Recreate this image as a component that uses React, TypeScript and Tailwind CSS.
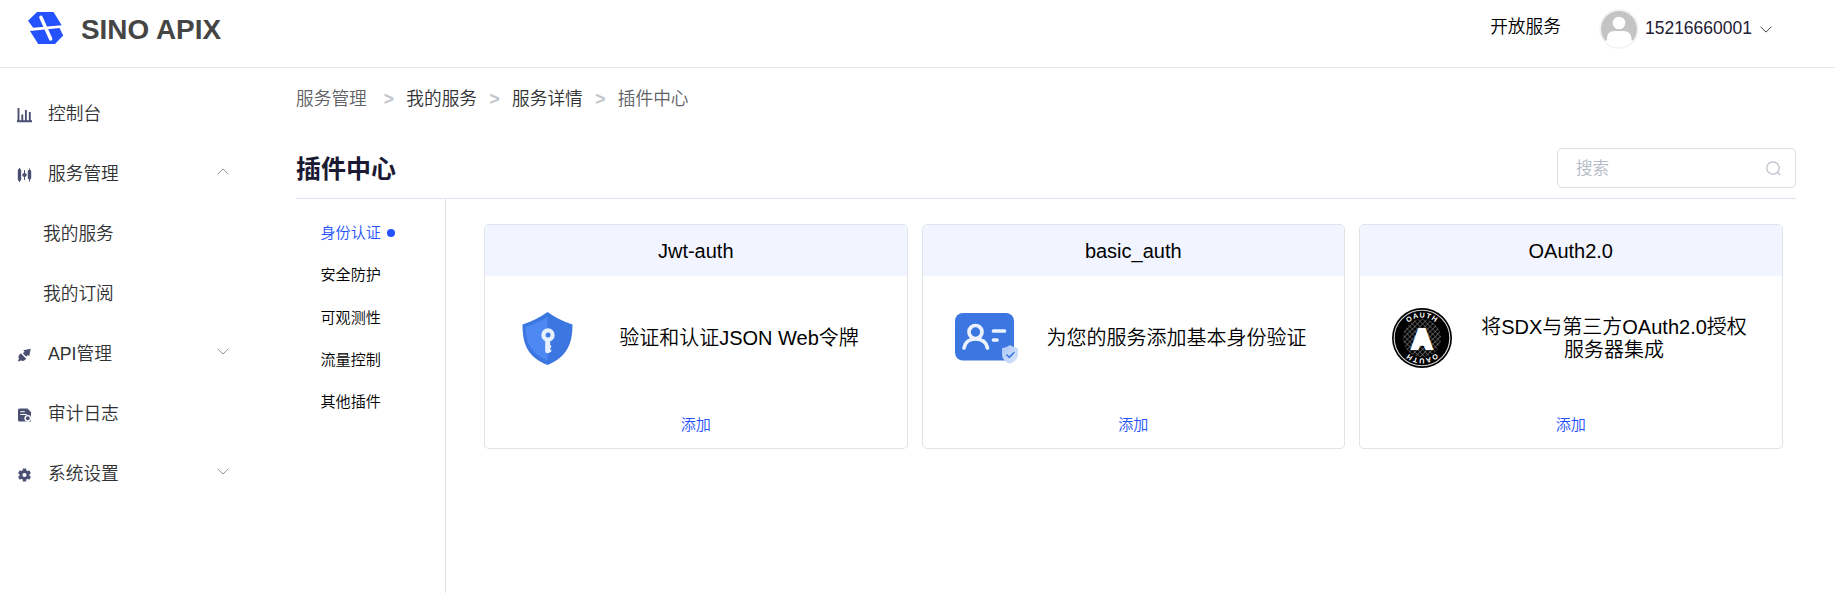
import React from "react";

const FONT = "font-['Liberation_Sans','Noto_Sans_CJK_SC',sans-serif]";

function Chevron({ up = false, className = "" }: { up?: boolean; className?: string }) {
  return (
    <svg viewBox="0 0 12 7" className={`h-[7px] w-3 shrink-0 ${className}`} fill="none" stroke="currentColor" strokeWidth="1">
      <path d={up ? "M0.6 6.3 6 0.9l5.4 5.4" : "M0.6 0.7 6 6.1l5.4-5.4"} />
    </svg>
  );
}

function Logo() {
  return (
    <svg viewBox="0 0 36 32" className="h-8 w-9" fill="#2452ff">
      <path d="M9 0h16.500l8.200 13.300-28.500 2.500L0 8.800z" />
      <path d="M2 18.900 31.500 16 35.200 23.500 27 32H10.200z" />
      <path d="M12.900 5.200 22.700 27" stroke="#fff" strokeWidth="3.400" strokeLinecap="round" />
    </svg>
  );
}

function Avatar() {
  return (
    <svg viewBox="0 0 40 40" className="size-10">
      <defs>
        <clipPath id="face"><circle cx="20" cy="20" r="18" /></clipPath>
      </defs>
      <circle cx="20" cy="20" r="19" fill="#fff" stroke="#f2f2f2" strokeWidth="1.500" />
      <g clipPath="url(#face)">
        <path d="M2 2h36v29.500h-5.500V30c0-5-3-8-8-8h-9c-5 0-7.500 3-7.500 8v1.500H2z" fill="#c4c4c4" />
        <circle cx="20" cy="14" r="6.300" fill="#fff" />
      </g>
    </svg>
  );
}

const icons: Record<string, React.ReactNode> = {
  chart: (
    <path d="M0 14.200h15M1.500 1v12.500M5.300 7.500v6.500M8.900 3v11M12.800 5v9" stroke="currentColor" strokeWidth="1.900" fill="none" />
  ),
  sliders: (
    <g>
      <path d="M2.500 1v14M7.500 3v10M12.500 1.500v13" stroke="currentColor" strokeWidth="1" />
      <rect x=".800" y="2" width="3.400" height="12" rx="1.400" />
      <path d="M7.500 5 10 8l-2.500 3L5 8z" />
      <rect x="10.800" y="3" width="3.400" height="9.500" rx="1.400" />
    </g>
  ),
  plug: (
    <g transform="rotate(45 7.500 8)">
      <path d="M3.700 9.400h7.600v2.300c0 1.500-1.600 2.700-2.800 2.900v2h-2v-2c-1.200-.2-2.800-1.400-2.800-2.900z" />
      <path d="M5.200 8V5.600H3.300L7.500-.8l4.200 6.400H9.800V8z" />
    </g>
  ),
  log: (
    <g>
      <path d="M2.500 1.500h8L14 5v9.500H2.500A1.500 1.500 0 0 1 1 13V3a1.500 1.500 0 0 1 1.500-1.500z" />
      <path d="M3.300 4.700h4.500M3.300 7.500h6.500" stroke="#fff" strokeWidth="1.100" />
      <circle cx="10.800" cy="11.300" r="2.700" fill="currentColor" stroke="#fff" strokeWidth="1.400" />
    </g>
  ),
  gear: (
    <g>
      <circle cx="7.500" cy="8" r="3.600" fill="none" stroke="currentColor" strokeWidth="3" />
      <path d="M7.500 1.500v3M7.500 11.500v3M1.900 4.800l2.500 1.400M10.600 9.800l2.500 1.400M1.900 11.200l2.500-1.400M10.600 6.200l2.500-1.400" stroke="currentColor" strokeWidth="3.400" />
    </g>
  ),
};

type Item = { label: string; icon?: string; arrow?: "up" | "down" };

const menu: Item[] = [
  { label: "控制台", icon: "chart" },
  { label: "服务管理", icon: "sliders", arrow: "up" },
  { label: "我的服务" },
  { label: "我的订阅" },
  { label: "API管理", icon: "plug", arrow: "down" },
  { label: "审计日志", icon: "log" },
  { label: "系统设置", icon: "gear", arrow: "down" },
];

function Sidebar() {
  return (
    <nav className="w-[246px] shrink-0 pt-[15px]">
      {menu.map((m) => (
        <div key={m.label} className={`flex h-[60px] items-center pr-[17px] ${m.icon ? "pl-[17px]" : "pl-[43px]"}`}>
          {m.icon && (
            <svg viewBox="0 0 15 16" className="mt-[3px] mr-4 h-4 w-[15px] shrink-0 text-[#4b5072]" fill="currentColor">
              {icons[m.icon]}
            </svg>
          )}
          <span className="pt-0.5 text-[17.700px] text-[#303133]">{m.label}</span>
          {m.arrow && <Chevron up={m.arrow === "up"} className="-mt-1 ml-auto text-[#909399]" />}
        </div>
      ))}
    </nav>
  );
}

function ShieldIcon() {
  return (
    <svg viewBox="0 0 60 60" className="size-[60px]">
      <path d="M30.500 4Q41.500 12 55.500 16.500C55.500 36 50 49 30.500 57 10.500 49 5.500 36 5.500 16.500Q19.500 12 30.500 4z" fill="#3b76e1" />
      <path d="M30.500 8.500V52.500C13.500 45 8.800 34 8.500 19Q20 15.500 30.500 8.500z" fill="#4d88f3" />
      <circle cx="31" cy="27" r="4.600" fill="none" stroke="#e9f0fd" strokeWidth="4.200" />
      <path d="M30.700 33v9.800" stroke="#e9f0fd" strokeWidth="5" strokeLinecap="round" />
      <path d="M31 38.500h3.200M31 42.800h3.200" stroke="#e9f0fd" strokeWidth="2.600" />
    </svg>
  );
}

function CardIcon() {
  return (
    <svg viewBox="0 0 60 60" className="size-[60px] overflow-visible">
      <defs>
        <linearGradient id="badge" x1="0" y1="0" x2="1" y2="1">
          <stop offset="0" stopColor="#a9c5f7" />
          <stop offset="1" stopColor="#dbe7fc" />
        </linearGradient>
      </defs>
      <rect x="0" y="5" width="59" height="47.500" rx="8" fill="#3b76e1" />
      <g fill="none" stroke="#edf3fe" strokeWidth="3.700" strokeLinecap="round">
        <circle cx="20.500" cy="24" r="6.500" />
        <path d="M9 40c1-5.500 5-9 11.500-9s10.800 3.500 12 9M38.500 23h11M38.500 32h3.500" />
      </g>
      <path d="M55 37q4 3 8 3.300V47q-.5 6-8 9-7.500-3-8-9v-6.700q4-.3 8-3.300z" fill="url(#badge)" />
      <path d="m51.500 46.500 2.800 2.800 5-5" fill="none" stroke="#3b76e1" strokeWidth="1.600" />
    </svg>
  );
}

function OAuthIcon() {
  const word = (
    <text fill="#fff" fontSize="7.200" fontWeight="700" letterSpacing="1" textAnchor="middle">
      <textPath href="#arc" startOffset="50%">OAUTH</textPath>
    </text>
  );
  return (
    <svg viewBox="0 0 60 60" className="size-[60px]">
      <defs>
        <path id="arc" d="M9.500 30a20.500 20.500 0 0 1 41 0" />
        <pattern id="mesh" width="3.600" height="3.600" patternUnits="userSpaceOnUse" patternTransform="rotate(45)">
          <path d="M0 0h3.600M0 0v3.600" stroke="#8a8a8a" strokeWidth="1.100" />
        </pattern>
      </defs>
      <circle cx="30" cy="30" r="30" fill="#000" />
      <circle cx="30" cy="30" r="27.800" fill="none" stroke="#d8d8d8" strokeWidth="1.100" />
      <circle cx="30" cy="30" r="19" fill="url(#mesh)" />
      {word}
      <g transform="rotate(180 30 30)">{word}</g>
      <text x="30" y="40.300" textAnchor="middle" fontSize="26" fontWeight="700" fill="#fff" stroke="#fff" strokeWidth="4" strokeLinejoin="miter" strokeMiterlimit="2">A</text>
    </svg>
  );
}

const plugins = [
  { name: "Jwt-auth", text: "验证和认证JSON Web令牌", icon: <ShieldIcon /> },
  { name: "basic_auth", text: "为您的服务添加基本身份验证", icon: <CardIcon /> },
  { name: "OAuth2.0", text: "将SDX与第三方OAuth2.0授权服务器集成", icon: <OAuthIcon /> },
];

const tabs = ["身份认证", "安全防护", "可观测性", "流量控制", "其他插件"];
const crumbs = ["服务管理", "我的服务", "服务详情", "插件中心"];

export default function App() {
  return (
    <div className={`flex h-[593px] w-[1835px] flex-col overflow-hidden bg-white font-[350] text-black ${FONT}`}>
      <header className="flex h-[68px] shrink-0 items-start border-b border-[#e6e6e6] pl-7">
        <div className="mt-3"><Logo /></div>
        <svg viewBox="0 0 142 40" className="mt-[9px] ml-[16px] h-10 w-[142px]">
          <text x="1" y="30" fontSize="27.500" fontWeight="700" textLength="140" lengthAdjust="spacingAndGlyphs" fill="#454545">SINO APIX</text>
        </svg>
        <div className="mt-[9px] ml-auto flex h-10 items-center text-[17.500px]">
          <span className="-mt-1 text-[17.700px]">开放服务</span>
          <span className="ml-[38px] flex items-center">
            <Avatar />
            <span className="-mt-0.5 ml-1.5 text-[#1d2033]">15216660001</span>
            <Chevron className="ml-2 text-[#444]" />
          </span>
        </div>
        <div className="w-[63px]" />
      </header>

      <div className="flex min-h-0 flex-1">
        <Sidebar />
        <main className="ml-[50px] flex w-[1500px] flex-col">
          <div className="mt-[19px] flex h-6 items-center text-[17.500px]">
            {crumbs.map((c, i) => (
              <React.Fragment key={c}>
                {i > 0 && (
                  <span className={`w-[35px] text-center font-bold text-[#c0c4cc] ${i === 1 ? "ml-[4.500px]" : ""}`}>&gt;</span>
                )}
                <span className={`text-[17.700px] ${i === 0 || i === 3 ? "text-[#606266]" : "text-[#303133]"}`}>{c}</span>
              </React.Fragment>
            ))}
          </div>

          <div className="mt-[37px] flex h-[51px] items-start justify-between border-b border-[#dfe4f0]">
            <h1 className="mt-px text-[25px] leading-10 font-bold text-[#1a1a32]">插件中心</h1>
            <div className="flex h-10 w-[239px] items-center justify-between rounded-[5px] border border-[#dcdfe9] pr-3.5 pl-[18px] text-[16.500px] text-[#b4bac6]">
              <span>搜索</span>
              <svg viewBox="0 0 15 15" className="size-[15px]" fill="none" stroke="#b8bdc9" strokeWidth="1.200">
                <circle cx="7" cy="7" r="6.200" />
                <path d="m11.500 11.500 2.800 2.500" />
              </svg>
            </div>
          </div>

          <div className="flex min-h-0 flex-1">
            <div className="w-[150px] shrink-0 border-r border-[#dfe2ec] pt-[13.500px] pl-[24.500px] text-[15.100px]">
              {tabs.map((t, i) => (
                <div key={t} className={`flex h-[42.200px] items-center gap-1.5 ${i === 0 ? "text-[#2452ff]" : ""}`}>
                  {t}
                  {i === 0 && <i className="-mt-0.5 size-2 rounded-full bg-[#2452ff]" />}
                </div>
              ))}
            </div>

            <div className="flex gap-[14px] pt-[25px] pl-[38px]">
              {plugins.map((p) => (
                <section key={p.name} className="flex h-[225px] w-[423.500px] flex-col overflow-hidden rounded-[5px] border border-[#dfe4ea]">
                  <h2 className="flex h-[51px] items-center justify-center bg-[#f2f5ff] pt-0.5 text-[20px]">{p.name}</h2>
                  <div className="flex h-[126px] items-center pl-[32px]">
                    {p.icon}
                    <p className="ml-[22px] w-[280px] pt-0.5 text-center text-[20px] leading-[23.400px]">{p.text}</p>
                  </div>
                  <button className="mx-auto h-[48px] pt-[3px] text-[15.100px] text-[#2452ff]">添加</button>
                </section>
              ))}
            </div>
          </div>
        </main>
      </div>
    </div>
  );
}
